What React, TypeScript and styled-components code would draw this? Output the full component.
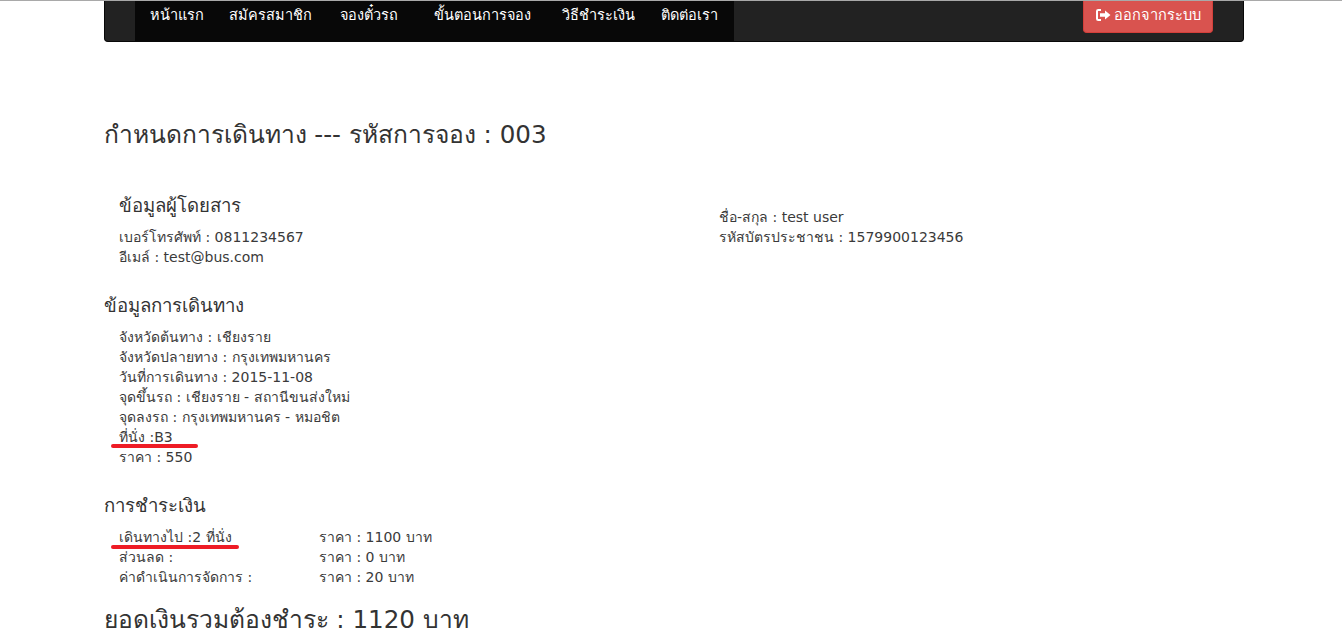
import React from "react";
import styled, { createGlobalStyle } from "styled-components";

const Global = createGlobalStyle`
  html, body { margin: 0; padding: 0; background: #fff; height: 639px; overflow: hidden; }
  body { font-family: "DejaVu Sans", "Noto Sans", "Liberation Sans", sans-serif; font-size: 14px; line-height: 20px; color: #3a3a3a; }
`;
const TopRule = styled.div`height: 1px; background: #a9a9a9;`;
const Page = styled.div`width: 1140px; margin-left: 103.5px;`;
const Navbar = styled.nav`
  display: flex; justify-content: space-between; background: #222;
  border: 1px solid #080808; border-top: 0; border-radius: 0 0 4px 4px; box-sizing: border-box; padding: 0 30px;
  height: 41px; margin-left: 0.5px;
`;
const Menu = styled.ul`display: flex; margin: 0; padding: 0; list-style: none; background: #080808; height: 40px; width: 599px;`;
const MenuItem = styled.li<{ $w: number }>`
  width: ${(p) => p.$w}px; padding: 4px 0 0 15px; box-sizing: border-box; color: #fff; font-size: 14.5px; line-height: 20px; white-space: nowrap;
`;
const LogoutButton = styled.button`
  display: flex; align-items: center; gap: 3px; height: 32px; width: 130px; justify-content: center;
  background: #d9534f; color: #fff; border: 1px solid #d43f3a; border-top: 0; border-radius: 0 0 4px 4px;
  font: inherit; font-size: 14.6px; padding: 0 0 4px;
`;
const PageTitle = styled.h3`font-size: 24.6px; font-weight: 500; line-height: 30px; margin: 0; padding-top: 78px; color: #333;`;
const PassengerGrid = styled.section`display: grid; grid-template-columns: 600px 1fr; padding: 0 15.5px; margin-top: 43px;`;
const SubTitle = styled.h4`font-size: 18.6px; font-weight: 500; line-height: 26px; margin: 0 0 8px; color: #333;`;
const Line = styled.div`height: 20px; white-space: nowrap; position: relative;`;
const Block = styled.div`padding-left: 15.5px;`;
const Section = styled.section`margin-top: 26px;`;
const RightCol = styled.div`padding-top: 14px;`;
const PayRow = styled.div`display: grid; grid-template-columns: 200px 1fr; height: 20px; white-space: nowrap; position: relative;`;
const RedMark = styled.span<{ $w: number; $top: number }>`
  position: absolute; left: -8px; top: ${(p) => p.$top}px; width: ${(p) => p.$w}px; height: 4px; border-radius: 2px; background: #ee1c25;
`;
const Total = styled.h3`font-size: 24.6px; font-weight: 500; line-height: 30px; margin: 18px 0 0; color: #333;`;

const LogoutIcon = () => (
  <svg width="16" height="14" viewBox="0 0 16 14" fill="none">
    <path d="M6 2H3.2C2.5 2 2 2.5 2 3.2v7.6c0 .7.5 1.2 1.2 1.2H6" stroke="#fff" strokeWidth="2" />
    <path d="M5 5.2h5V2.4L15.5 7 10 11.6V8.8H5z" fill="#fff" />
  </svg>
);

const menu: [string, number][] = [
  ["หน้าแรก", 79], ["สมัครสมาชิก", 111], ["จองตั๋วรถ", 94], ["ขั้นตอนการจอง", 128], ["วิธีชำระเงิน", 99], ["ติดต่อเรา", 73],
];

export default function App() {
  return (
    <>
      <Global />
      <TopRule />
      <Page>
        <Navbar>
          <Menu>{menu.map(([m, w]) => <MenuItem key={m} $w={w}>{m}</MenuItem>)}</Menu>
          <LogoutButton><LogoutIcon />ออกจากระบบ</LogoutButton>
        </Navbar>
        <PageTitle>กำหนดการเดินทาง --- รหัสการจอง : 003</PageTitle>
        <PassengerGrid>
          <div>
            <SubTitle>ข้อมูลผู้โดยสาร</SubTitle>
            <Line>เบอร์โทรศัพท์ : 0811234567</Line>
            <Line>อีเมล์ : test@bus.com</Line>
          </div>
          <RightCol>
            <Line>ชื่อ-สกุล : test user</Line>
            <Line>รหัสบัตรประชาชน : 1579900123456</Line>
          </RightCol>
        </PassengerGrid>
        <Section>
          <SubTitle>ข้อมูลการเดินทาง</SubTitle>
          <Block>
            <Line>จังหวัดต้นทาง : เชียงราย</Line>
            <Line>จังหวัดปลายทาง : กรุงเทพมหานคร</Line>
            <Line>วันที่การเดินทาง : 2015-11-08</Line>
            <Line>จุดขึ้นรถ : เชียงราย - สถานีขนส่งใหม่</Line>
            <Line>จุดลงรถ : กรุงเทพมหานคร - หมอชิต</Line>
            <Line>ที่นั่ง :B3<RedMark $w={87} $top={17} /></Line>
            <Line>ราคา : 550</Line>
          </Block>
        </Section>
        <Section>
          <SubTitle>การชำระเงิน</SubTitle>
          <Block>
            <PayRow><span>เดินทางไป :2 ที่นั่ง</span><span>ราคา : 1100 บาท</span><RedMark $w={128} $top={18} /></PayRow>
            <PayRow><span>ส่วนลด :</span><span>ราคา : 0 บาท</span></PayRow>
            <PayRow><span>ค่าดำเนินการจัดการ :</span><span>ราคา : 20 บาท</span></PayRow>
          </Block>
        </Section>
        <Total>ยอดเงินรวมต้องชำระ : 1120 บาท</Total>
      </Page>
    </>
  );
}
